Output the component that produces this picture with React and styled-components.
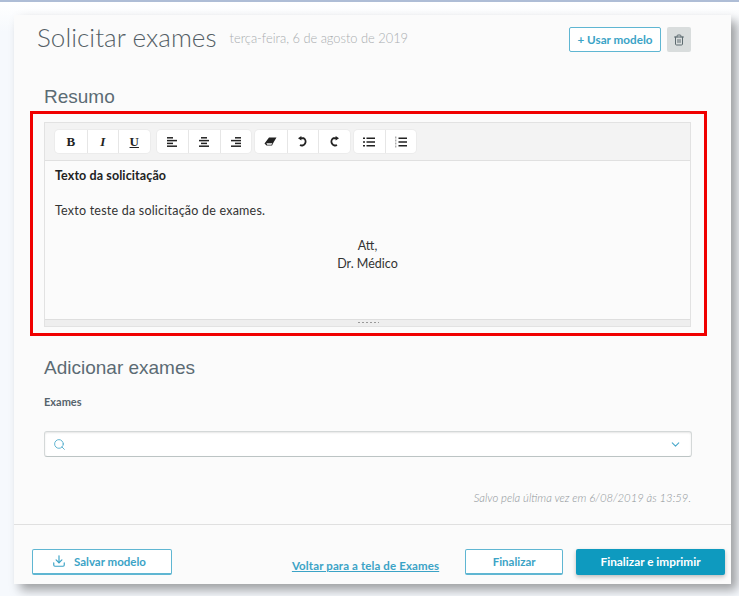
import React from "react";
import styled, { createGlobalStyle } from "styled-components";
import { Search, ChevronDown, Trash2, Download } from "lucide-react";

const GlobalStyle = createGlobalStyle`
    html, body {
        margin: 0;
        padding: 0;
        background: #f6f9fd;
    }
    body {
        font-family: "Lato", "Open Sans", sans-serif;
    }
`;

const Page = styled.div`
    width: 739px;
    height: 596px;
    overflow: hidden;
    box-sizing: border-box;
    border-top: 2px solid #aebdd6;
    padding: 13px 8px 0 14px;
    background: linear-gradient(#ffffff, #f6f9fd 30px);
`;

const Card = styled.main`
    height: 569px;
    box-sizing: border-box;
    background: #fbfbfb;
    box-shadow: 6px 6px 10px rgba(0, 0, 0, 0.36);
    display: flex;
    flex-direction: column;
`;

const Header = styled.header`
    height: 47px;
    padding: 0 40px 0 23px;
    display: flex;
    align-items: center;
    margin-top: 1px;
`;

const Title = styled.h1`
    margin: 0 0 6px;
    font-size: 26px;
    font-weight: 300;
    color: #555f66;
    letter-spacing: 0.05px;
`;

const DateText = styled.span`
    margin: 0 0 3px 13px;
    font-size: 12.85px;
    font-weight: 300;
    color: #a9adb0;
`;

const HeaderActions = styled.div`
    margin-left: auto;
    display: flex;
    align-items: center;
    gap: 6px;
`;

const OutlineButton = styled.button`
    height: ${props => props.$height || 26}px;
    width: ${props => props.$width}px;
    box-sizing: border-box;
    background: #fff;
    border: 1px solid #5fb6d2;
    border-bottom-width: ${props => props.$thick ? 2 : 1}px;
    border-radius: 2px;
    padding: 0 ${props => props.$pushLeft || 0}px 1px 0;
    display: flex;
    align-items: center;
    justify-content: center;
    gap: ${props => props.$gap || 7}px;
    font-family: "Lato", sans-serif;
    font-size: ${props => props.$size || 11.5}px;
    font-weight: 700;
    color: #3ba3c6;
`;

const IconButton = styled.button`
    width: 24px;
    height: 25px;
    padding: 0;
    border: 0;
    border-radius: 2px;
    background: #d9dddd;
    color: #5d6b70;
    display: flex;
    align-items: center;
    justify-content: center;
`;

const SectionTitle = styled.h2`
    margin: ${props => props.$margin};
    padding-left: 30px;
    font-family: "Liberation Sans", Arial, sans-serif;
    font-size: 19px;
    font-weight: 400;
    line-height: 22px;
    color: #5b6b74;
`;

const Highlight = styled.section`
    margin: 0 24px 0 16px;
    height: 225px;
    box-sizing: border-box;
    border: 3px solid #f00000;
    padding: 8px 13px 0 11px;
`;

const Editor = styled.div`
    height: 205px;
    box-sizing: border-box;
    border: 1px solid #e2e2e2;
    display: flex;
    flex-direction: column;
`;

const Toolbar = styled.div`
    height: 38px;
    flex: none;
    box-sizing: border-box;
    background: #f3f3f3;
    border-bottom: 1px solid #e0e0e0;
    padding: 7px 0 0 10px;
    display: flex;
    gap: 4px;
`;

const ToolGroup = styled.div`
    display: flex;
    height: 23px;
    margin-right: ${props => props.$wide ? 3 : 0}px;
    background: #fff;
    border-radius: 4px;
    box-shadow: 0 0 0 1px #ececec;
`;

const ToolButton = styled.button`
    width: ${props => props.$narrow ? 31 : 31.5}px;
    height: 23px;
    padding: 0;
    border: 0;
    background: transparent;
    border-left: 1px solid #e6e6e6;
    display: flex;
    align-items: center;
    justify-content: center;
    font-family: "Liberation Serif", "Times New Roman", serif;
    font-size: 13px;
    font-weight: 700;
    font-style: ${props => props.$italic ? "italic" : "normal"};
    text-decoration: ${props => props.$underline ? "underline" : "none"};
    color: #222;

    &:first-child {
        border-left: 0;
    }
`;

const EditorBody = styled.div`
    flex: 1;
    padding: 6px 10px 0;
    font-family: "Lato", sans-serif;
    font-size: 12.5px;
    line-height: 17.6px;
    color: #333;
`;

const Paragraph = styled.p`
    margin: 0;
    min-height: 17.6px;
    font-weight: ${props => props.$bold ? 700 : 400};
    text-align: ${props => props.$center ? "center" : "left"};
    letter-spacing: ${props => props.$center ? 0 : props.$bold ? 0.1 : 0.22}px;
    color: ${props => props.$bold ? "#222" : "#333"};
`;

const ResizeBar = styled.div`
    height: 6px;
    flex: none;
    background: #eeeeee;
    border-top: 1px solid #dedede;
    display: flex;
    justify-content: center;
    align-items: center;
`;

const Grip = styled.span`
    width: 22px;
    height: 4px;
    background-image: radial-gradient(#999 0.8px, transparent 0.9px);
    background-size: 4px 3px;
`;

const Label = styled.label`
    display: block;
    margin: 16px 0 0 30px;
    font-size: 11px;
    line-height: 14px;
    font-weight: 700;
    color: #56646c;
`;

const SearchBox = styled.div`
    margin: 22px 39px 0 30px;
    height: 26px;
    box-sizing: border-box;
    background: #fff;
    border: 1px solid #d4d8d8;
    border-bottom: 1px solid #bcc4c4;
    border-radius: 3px;
    box-shadow: inset 0 1px 2px rgba(0, 0, 0, 0.1);
    padding: 0 9px 0 8px;
    display: flex;
    align-items: center;
    justify-content: space-between;
    color: #49a9cb;
`;

const SavedNote = styled.p`
    margin: 34px 40px 0 0;
    font-size: 11.3px;
    line-height: 14px;
    font-style: italic;
    font-weight: 300;
    text-align: right;
    color: #8d9397;
`;

const Footer = styled.footer`
    margin-top: 19px;
    border-top: 1px solid #e0e0e0;
    padding: 24px 6px 0 18px;
    display: flex;
    align-items: flex-start;
`;

const BackLink = styled.a`
    margin: 10px 26px 0 120px;
    font-size: 11.5px;
    line-height: 14px;
    font-weight: 700;
    color: #3ba3c6;
    text-decoration: underline;
    letter-spacing: 0.12px;
    white-space: nowrap;
`;

const PrimaryButton = styled.button`
    margin-left: 13px;
    width: 149px;
    height: 26px;
    border: 0;
    border-radius: 2px;
    padding: 0 0 1px;
    background: #0e9abf;
    box-shadow: 0 2px 4px rgba(0, 0, 0, 0.25);
    font-family: "Lato", sans-serif;
    font-size: 11.8px;
    font-weight: 700;
    color: #fff;
`;

const AlignIcon = ({ lines }) => (
    <svg width="12" height="10" viewBox="0 0 12 10" fill="none" stroke="#222" strokeWidth="1.5">
        {lines.map(([x1, x2], i) => <path key={i} d={`M${x1} ${0.8 + i * 2.8}H${x2}`} />)}
    </svg>
);

const EraserIcon = () => (
    <svg width="13" height="10" viewBox="0 0 13 10">
        <path d="M5 0.5H12.5L9.5 5.5L8 8.5H2.5L0.5 6.5Z" fill="#222" />
        <path d="M2.4 6.2H8.4L7.4 7.7H3.2Z" fill="#fff" />
    </svg>
);

const UndoIcon = ({ flip }) => (
    <svg width="12" height="11" viewBox="0 0 12 11" fill="none" style={flip ? { transform: "scaleX(-1)" } : undefined}>
        <path d="M3.5 2.2H6.5A3.5 3.5 0 1 1 3 9" stroke="#222" strokeWidth="1.9" />
        <path d="M1 2.2L4.4 0V4.4Z" fill="#222" />
    </svg>
);

const BulletIcon = () => (
    <svg width="12" height="10" viewBox="0 0 12 10" fill="none" stroke="#222" strokeWidth="1.5">
        <path d="M0 1.2H2M0 5H2M0 8.8H2" />
        <path d="M3.5 1.2H12M3.5 5H12M3.5 8.8H12" />
    </svg>
);

const NumberIcon = () => (
    <svg width="12" height="12" viewBox="0 0 12 12" fill="none">
        <path d="M0.8 0.5V11.5" stroke="#8a8a8a" strokeWidth="1" strokeDasharray="2 1" />
        <path d="M3.5 2.2H12M3.5 6H12M3.5 9.8H12" stroke="#222" strokeWidth="1.5" />
    </svg>
);

const App = () => (
    <Page>
        <GlobalStyle />
        <Card>
            <Header>
                <Title>Solicitar exames</Title>
                <DateText>terça-feira, 6 de agosto de 2019</DateText>
                <HeaderActions>
                    <OutlineButton $width={92} $height={25} $size={11.7}>+ Usar modelo</OutlineButton>
                    <IconButton aria-label="Excluir"><Trash2 size={12} strokeWidth={2} /></IconButton>
                </HeaderActions>
            </Header>

            <SectionTitle $margin="23px 0 3px">Resumo</SectionTitle>
            <Highlight>
                <Editor>
                    <Toolbar>
                        <ToolGroup $wide>
                            <ToolButton>B</ToolButton>
                            <ToolButton $italic>I</ToolButton>
                            <ToolButton $underline>U</ToolButton>
                        </ToolGroup>
                        <ToolGroup>
                            <ToolButton><AlignIcon lines={[[1, 7], [1, 11], [1, 7], [1, 11]]} /></ToolButton>
                            <ToolButton><AlignIcon lines={[[3, 9], [1, 11], [3, 9], [1, 11]]} /></ToolButton>
                            <ToolButton><AlignIcon lines={[[5, 11], [1, 11], [5, 11], [1, 11]]} /></ToolButton>
                        </ToolGroup>
                        <ToolGroup>
                            <ToolButton><EraserIcon /></ToolButton>
                            <ToolButton><UndoIcon /></ToolButton>
                            <ToolButton><UndoIcon flip /></ToolButton>
                        </ToolGroup>
                        <ToolGroup>
                            <ToolButton $narrow><BulletIcon /></ToolButton>
                            <ToolButton $narrow><NumberIcon /></ToolButton>
                        </ToolGroup>
                    </Toolbar>
                    <EditorBody>
                        <Paragraph $bold>Texto da solicitação</Paragraph>
                        <Paragraph />
                        <Paragraph>Texto teste da solicitação de exames.</Paragraph>
                        <Paragraph />
                        <Paragraph $center>Att,</Paragraph>
                        <Paragraph $center>Dr. Médico</Paragraph>
                    </EditorBody>
                    <ResizeBar><Grip /></ResizeBar>
                </Editor>
            </Highlight>

            <SectionTitle $margin="21px 0 0">Adicionar exames</SectionTitle>
            <Label>Exames</Label>
            <SearchBox>
                <Search size={13} strokeWidth={1.6} />
                <ChevronDown size={13} strokeWidth={2} />
            </SearchBox>

            <SavedNote>Salvo pela última vez em 6/08/2019 às 13:59.</SavedNote>

            <Footer>
                <OutlineButton $width={140} $gap={8} $pushLeft={6} $thick>
                    <Download size={14} strokeWidth={2} />
                    Salvar modelo
                </OutlineButton>
                <BackLink href="#">Voltar para a tela de Exames</BackLink>
                <OutlineButton $width={98} $thick>Finalizar</OutlineButton>
                <PrimaryButton>Finalizar e imprimir</PrimaryButton>
            </Footer>
        </Card>
    </Page>
);

export default App;
